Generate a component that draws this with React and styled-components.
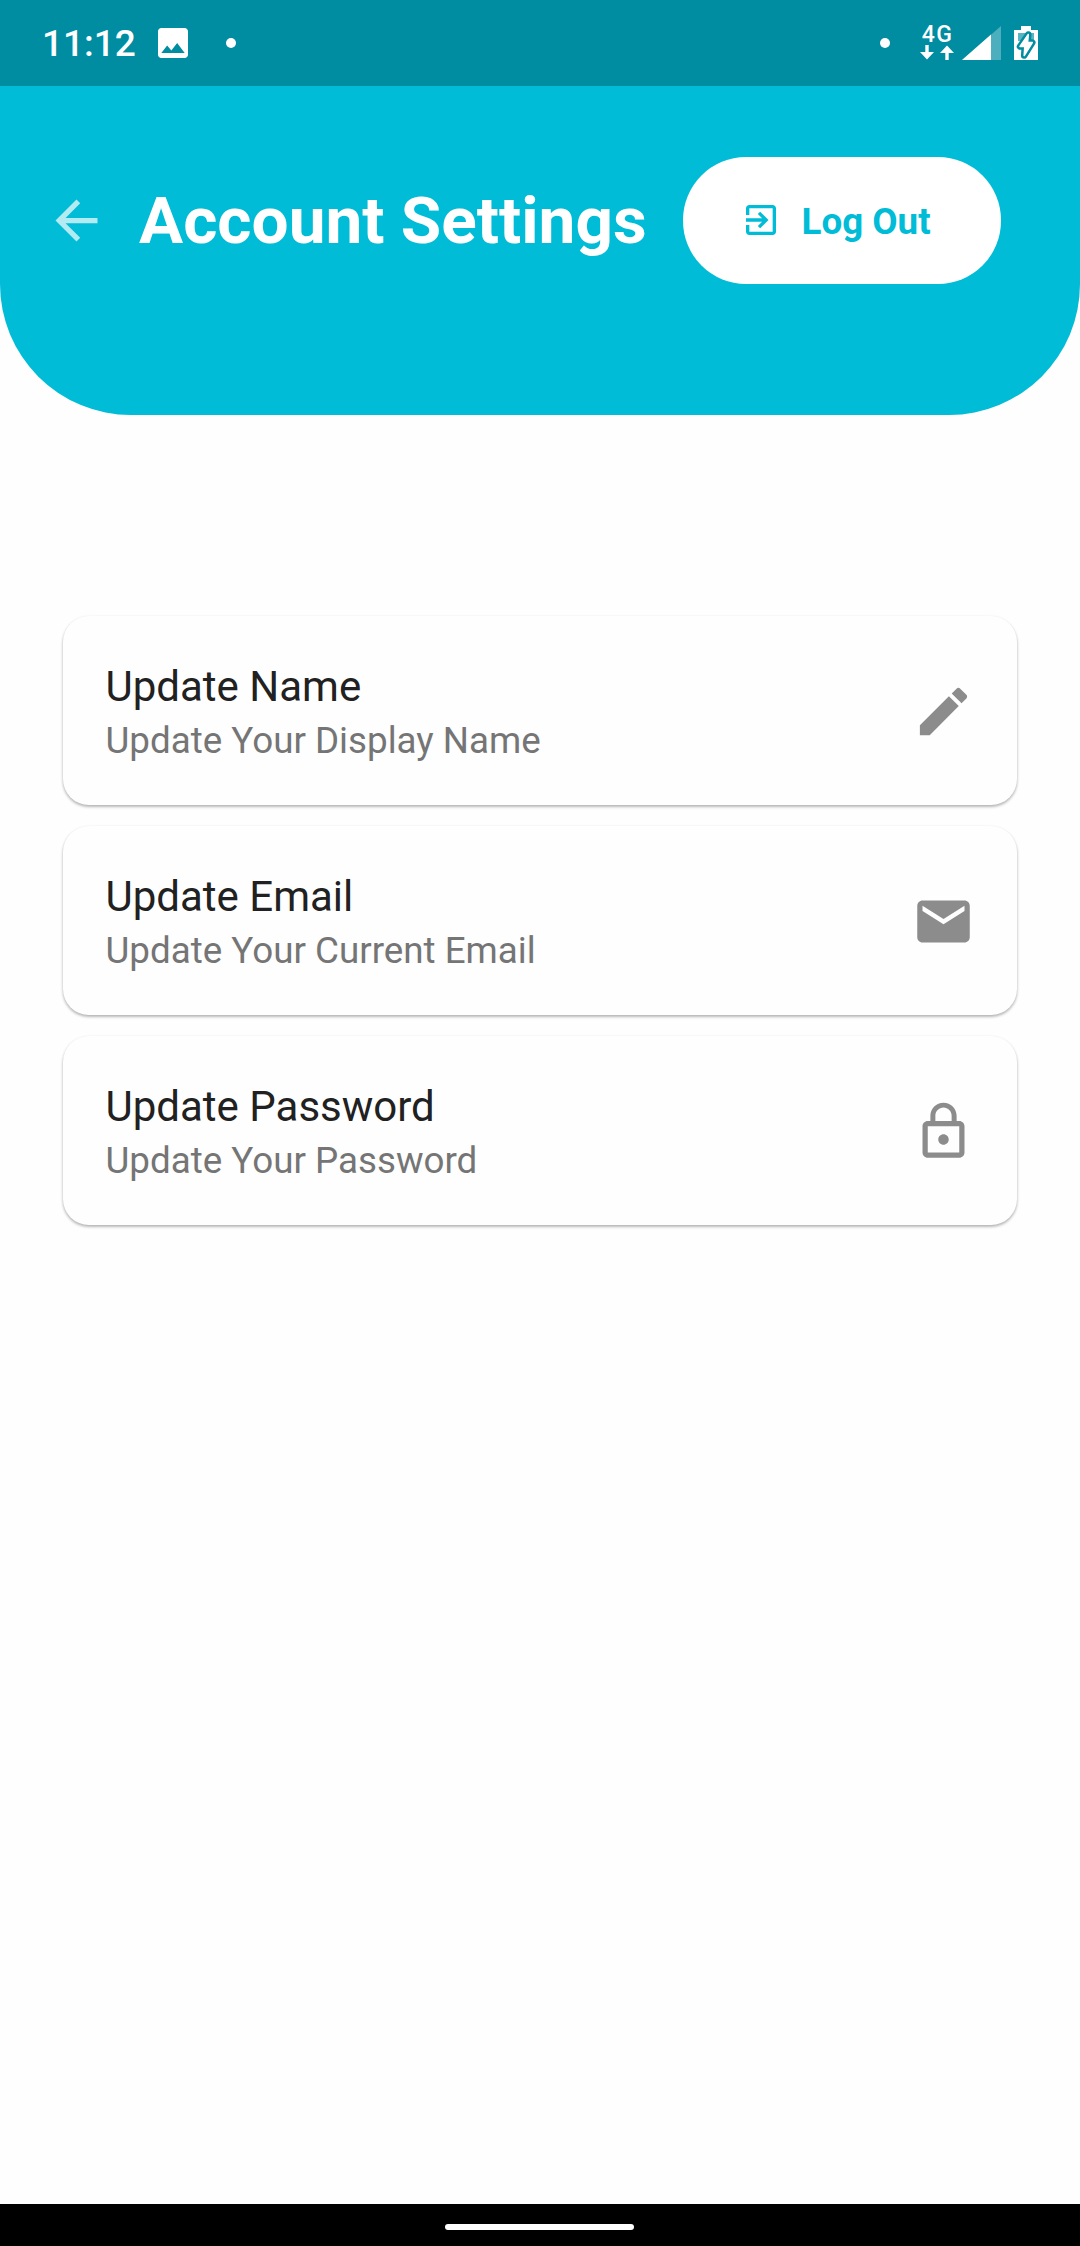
import React from "react";
import styled, { createGlobalStyle } from "styled-components";

const GlobalStyle = createGlobalStyle`
  body { margin: 0; background: #fefefe; }
  * { box-sizing: border-box; }
  h1, h2, p { margin: 0; font-weight: inherit; }
  svg { display: block; flex: none; }
`;

const Screen = styled.div`
  width: 1080px;
  height: 2246px;
  display: flex;
  flex-direction: column;
  background: #fefefe;
  font-family: Roboto, "Liberation Sans", sans-serif;
  white-space: nowrap;
`;

const StatusBar = styled.div`
  height: 86px;
  flex: none;
  display: flex;
  justify-content: space-between;
  align-items: center;
  padding: 0 42px;
  background: #008ca1;
  color: #fff;
`;

const StatusGroup = styled.div`
  display: flex;
  align-items: center;
`;

const Clock = styled.span`
  width: 116px;
  font-size: 37px;
  line-height: 44px;
  font-weight: 500;
  padding-top: 2px;
`;

const Dot = styled.span`
  width: 10px;
  height: 10px;
  border-radius: 50%;
  background: #fff;
  margin-left: ${(p) => p.$before || 0}px;
  margin-right: ${(p) => p.$after || 0}px;
`;

const Network = styled.div`
  width: 34px;
  height: 36px;
  margin-right: 8px;
  display: flex;
  flex-direction: column;
  align-items: center;
`;

const NetworkLabel = styled.span`
  height: 20px;
  font-size: 23px;
  line-height: 20px;
  font-weight: 500;
  letter-spacing: 1.5px;
  padding-left: 1px;
`;

const Header = styled.header`
  height: 328.5px;
  flex: none;
  display: flex;
  align-items: flex-start;
  padding: 71px 79px 0 45px;
  background: #00bcd7;
  border-radius: 0 0 131px 131px;
`;

const BackButton = styled.button`
  width: 94px;
  height: 126px;
  padding: 0;
  border: 0;
  background: none;
  display: flex;
  align-items: center;
  color: rgba(255, 255, 255, 0.7);
`;

const Title = styled.h1`
  flex: 1;
  font-size: 65.700px;
  line-height: 126px;
  padding-top: 1px;
  font-weight: 700;
  color: #fff;
`;

const LogOutButton = styled.button`
  width: 318px;
  height: 126.600px;
  border: 0;
  border-radius: 63px;
  padding: 0 0 0 58px;
  background: #fff;
  color: #00bcd7;
  display: flex;
  align-items: center;
  gap: 20.500px;
  font: 700 36.75px/44px Roboto, "Liberation Sans", sans-serif;
`;

const ButtonLabel = styled.span`
  padding-top: 3px;
`;

const List = styled.main`
  flex: 1;
  display: flex;
  flex-direction: column;
  gap: 21px;
  padding: 201.500px 63px 0;
`;

const Card = styled.section`
  height: 189px;
  display: flex;
  align-items: center;
  justify-content: space-between;
  padding: 1px 42px 0 42.500px;
  border-radius: 26px;
  background: #fefefe;
  color: #8c8c8c;
  box-shadow: 0 2px 3px rgba(0, 0, 0, 0.22), 0 1px 3px rgba(0, 0, 0, 0.12);
`;

const CardText = styled.div`
  padding-top: 6px;
`;

const CardTitle = styled.h2`
  font-size: 42px;
  line-height: 54px;
  color: #212121;
`;

const CardNote = styled.p`
  font-size: 36.75px;
  line-height: 54px;
  color: #757575;
`;

const NavBar = styled.footer`
  height: 42px;
  flex: none;
  display: flex;
  padding: 20px 0 0 445px;
  background: #000;
`;

const Handle = styled.span`
  width: 189px;
  height: 6px;
  border-radius: 3px;
  background: #fff;
`;

const BatteryGap = styled.span`
  width: 13px;
`;

const Icon = ({ size = 63, d }) => (
  <svg width={size} height={size} viewBox="0 0 24 24" fill="currentColor">
    <path d={d} />
  </svg>
);

const paths = {
  back: "M20 11H7.83l5.59-5.59L12 4l-8 8 8 8 1.41-1.41L7.83 13H20v-2z",
  exit: "M10.09 15.59L11.5 17l5-5-5-5-1.41 1.41L12.67 11H3v2h9.67l-2.58 2.59zM19 3H5c-1.11 0-2 .9-2 2v4h2V5h14v14H5v-4H3v4c0 1.1.89 2 2 2h14c1.1 0 2-.9 2-2V5c0-1.1-.9-2-2-2z",
  edit: "M3 17.25V21h3.75L17.81 9.94l-3.75-3.75L3 17.25zM20.71 7.04c.39-.39.39-1.02 0-1.41l-2.34-2.34c-.39-.39-1.02-.39-1.41 0l-1.83 1.83 3.75 3.75 1.83-1.83z",
  mail: "M20 4H4c-1.1 0-1.99.9-1.99 2L2 18c0 1.1.9 2 2 2h16c1.1 0 2-.9 2-2V6c0-1.1-.9-2-2-2zm0 4l-8 5-8-5V6l8 5 8-5v2z",
  lock: "M12 17c1.1 0 2-.9 2-2s-.9-2-2-2-2 .9-2 2 .9 2 2 2zm6-9h-1V6c0-2.76-2.24-5-5-5S7 3.24 7 6v2H6c-1.1 0-2 .9-2 2v10c0 1.1.9 2 2 2h12c1.1 0 2-.9 2-2V10c0-1.1-.9-2-2-2zM8.900 6c0-1.71 1.39-3.1 3.1-3.1s3.1 1.39 3.1 3.1v2H8.900V6zM18 20H6V10h12v10z",
  image: "M21 19V5c0-1.1-.9-2-2-2H5c-1.1 0-2 .9-2 2v14c0 1.1.9 2 2 2h14c1.1 0 2-.9 2-2zM8.500 13.500l2.500 3.010L14.500 12l4.500 6H5l3.500-4.500z",
};

const DataArrows = () => (
  <svg width="34" height="15" viewBox="0 0 34 15" fill="#fff">
    <path d="M5.300 0h3.400v7H14L7 14.500 0 7h5.300z" />
    <path d="M25.300 15h3.400V8H34L27 .5 20 8h5.300z" />
  </svg>
);

const Signal = () => (
  <svg width="39" height="34" viewBox="0 0 39 34" fill="#fff">
    <path d="M39 0v34H0z" opacity=".3" />
    <path d="M29 8.500V34H0z" />
  </svg>
);

const bolt = "M14.300 8.500L6 20.500h4.800L10.200 29.500 18.300 16.500h-4.700z";

const Battery = () => (
  <svg width="24" height="34" viewBox="0 0 24 34" strokeLinejoin="round">
    <path d="M7 0h10v4h7v30H0V4h7z" fill="#fff" />
    <path d="M4 7h16v8H4z" fill="#008ca1" opacity=".65" />
    <path d={bolt} fill="#008ca1" stroke="#008ca1" strokeWidth="6.500" />
    <path d={bolt} fill="#fff" stroke="#fff" strokeWidth="1.500" />
  </svg>
);

const settings = [
  { title: "Update Name", note: "Update Your Display Name", icon: "edit" },
  { title: "Update Email", note: "Update Your Current Email", icon: "mail" },
  { title: "Update Password", note: "Update Your Password", icon: "lock" },
];

export default function App() {
  return (
    <>
      <GlobalStyle />
      <Screen>
        <StatusBar>
          <StatusGroup>
            <Clock>11:12</Clock>
            <svg width="30" height="30" viewBox="3 3 18 18" fill="#fff">
              <path d={paths.image} />
            </svg>
            <Dot $before={38} />
          </StatusGroup>
          <StatusGroup>
            <Dot $after={30} />
            <Network>
              <NetworkLabel>4G</NetworkLabel>
              <DataArrows />
            </Network>
            <Signal />
            <BatteryGap />
            <Battery />
          </StatusGroup>
        </StatusBar>
        <Header>
          <BackButton aria-label="Back">
            <Icon d={paths.back} />
          </BackButton>
          <Title>Account Settings</Title>
          <LogOutButton>
            <Icon size={40} d={paths.exit} />
            <ButtonLabel>Log Out</ButtonLabel>
          </LogOutButton>
        </Header>
        <List>
          {settings.map(({ title, note, icon }) => (
            <Card key={title}>
              <CardText>
                <CardTitle>{title}</CardTitle>
                <CardNote>{note}</CardNote>
              </CardText>
              <Icon d={paths[icon]} />
            </Card>
          ))}
        </List>
        <NavBar>
          <Handle />
        </NavBar>
      </Screen>
    </>
  );
}
